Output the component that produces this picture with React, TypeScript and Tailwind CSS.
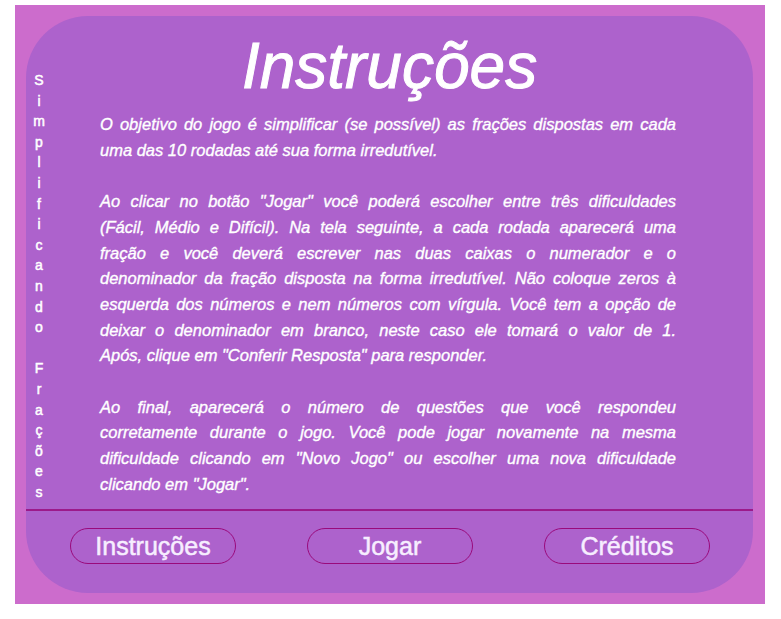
const letters = 'Simplificando Frações'.split('');

const paragraphs: string[][] = [
  [
    'O objetivo do jogo é simplificar (se possível) as frações dispostas em cada',
    'uma das 10 rodadas até sua forma irredutível.',
  ],
  [
    'Ao clicar no botão "Jogar" você poderá escolher entre três dificuldades',
    '(Fácil, Médio e Difícil). Na tela seguinte, a cada rodada aparecerá uma',
    'fração e você deverá escrever nas duas caixas o numerador e o',
    'denominador da fração disposta na forma irredutível. Não coloque zeros à',
    'esquerda dos números e nem números com vírgula. Você tem a opção de',
    'deixar o denominador em branco, neste caso ele tomará o valor de 1.',
    'Após, clique em "Conferir Resposta" para responder.',
  ],
  [
    'Ao final, aparecerá o número de questões que você respondeu',
    'corretamente durante o jogo. Você pode jogar novamente na mesma',
    'dificuldade clicando em "Novo Jogo" ou escolher uma nova dificuldade',
    'clicando em "Jogar".',
  ],
];

function NavButton({ label }: { label: string }) {
  return (
    <button className="w-[166px] h-[36px] rounded-full border-[1.5px] border-[#9a0a7c] text-[25px] leading-none text-[#f7eeff] [-webkit-text-stroke:0.5px_#f7eeff] cursor-pointer">
      {label}
    </button>
  );
}

export default function App() {
  return (
    <div className="min-h-[619px] bg-white font-['Liberation_Sans',Arial,sans-serif]">
      <div className="ml-[15px] pt-[5px]">
        <div className="w-[750px] h-[599px] bg-[#cc6ccc] pt-[11px] pl-[11px]">
          <div className="w-[727px] h-[577px] bg-[#ad62cc] rounded-[62px] flex flex-col overflow-hidden">
            <div className="h-[493px] grid grid-cols-[26px_1fr_26px]">
              <div className="pt-[54px] flex flex-col items-center text-[14px] leading-[20.6px] text-white [-webkit-text-stroke:0.5px_white]">
                {letters.map((ch, i) => (
                  <span key={i} className="h-[20.6px]">{ch === ' ' ? '\u00a0' : ch}</span>
                ))}
              </div>

              <div className="flex flex-col">
                <h1 className="pt-[18px] text-center text-[64px] leading-[64px] italic text-white [-webkit-text-stroke:1px_white]">
                  Instruções
                </h1>
                <div className="mt-[14px] ml-[48px] w-[576px] text-[16.5px] leading-[25.7px] italic text-white [-webkit-text-stroke:0.35px_white]">
                  {paragraphs.map((lines, p) => (
                    <div key={p} className={p > 0 ? 'mt-[25.7px]' : ''}>
                      {lines.map((line, i) => (
                        <div
                          key={i}
                          className={i < lines.length - 1 ? 'text-justify [text-align-last:justify]' : 'text-left'}
                        >
                          {line}
                        </div>
                      ))}
                    </div>
                  ))}
                </div>
              </div>
              <div />
            </div>

            <div className="h-[2px] bg-[#9c1a8a]" />

            <div className="pt-[17px] pl-[44px] flex gap-[71px]">
              <NavButton label="Instruções" />
              <NavButton label="Jogar" />
              <NavButton label="Créditos" />
            </div>
          </div>
        </div>
      </div>
    </div>
  );
}
